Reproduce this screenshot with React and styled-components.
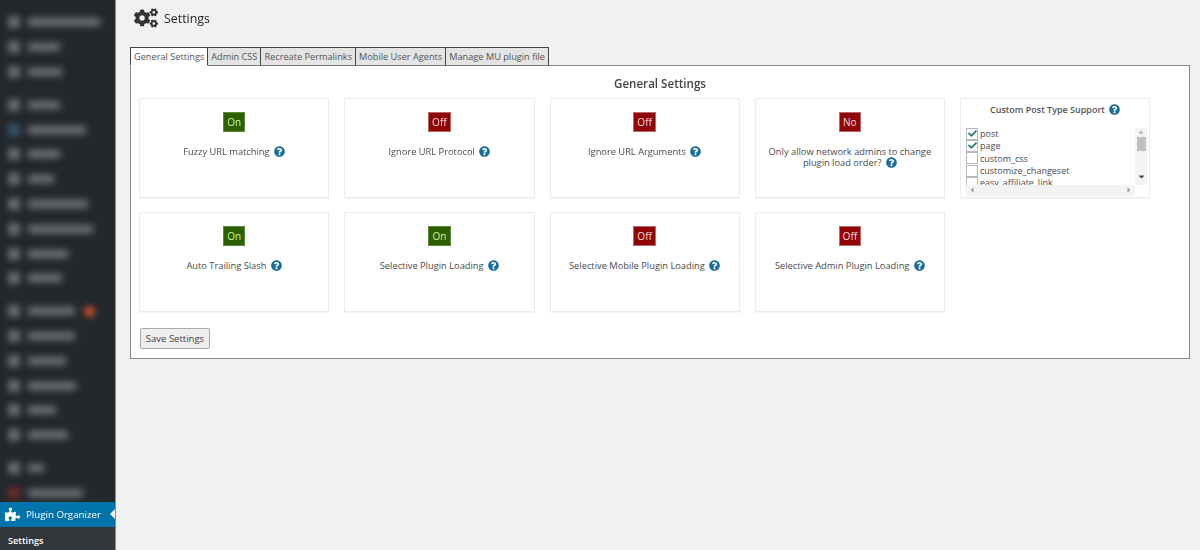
import React from 'react'
import styled, { createGlobalStyle } from 'styled-components'
import { FaCogs, FaPuzzlePiece, FaQuestionCircle, FaCheck, FaCaretUp, FaCaretDown, FaCaretLeft, FaCaretRight } from 'react-icons/fa'

const menuGroups = [
  [[72, 0], [32, 0], [34, 0]],
  [[32, 0], [58, 0, 'blue'], [32, 0], [26, 0], [60, 0], [65, 0], [40, 0], [34, 0]],
  [[47, 1], [47, 0], [38, 0], [48, 0], [28, 0], [40, 0]],
  [[16, 0], [55, 0, 'red']],
]

const firstRow = [
  { label: 'Fuzzy URL matching', state: 'On' },
  { label: 'Ignore URL Protocol', state: 'Off' },
  { label: 'Ignore URL Arguments', state: 'Off' },
  { label: 'Only allow network admins to change plugin load order?', state: 'No' },
]

const secondRow = [
  { label: 'Auto Trailing Slash', state: 'On' },
  { label: 'Selective Plugin Loading', state: 'On' },
  { label: 'Selective Mobile Plugin Loading', state: 'Off' },
  { label: 'Selective Admin Plugin Loading', state: 'Off' },
]

const postTypes = [
  { name: 'post', checked: true },
  { name: 'page', checked: true },
  { name: 'custom_css' },
  { name: 'customize_changeset' },
  { name: 'easy_affiliate_link' },
]

const tabs = ['General Settings', 'Admin CSS', 'Recreate Permalinks', 'Mobile User Agents', 'Manage MU plugin file']

const Toggle = ({ label, state }) => (
  <Card>
    <Switch $on={state === 'On'}>{state}</Switch>
    <CardLabel>
      {label} <Help />
    </CardLabel>
  </Card>
)

const App = () => (
  <Shell>
    <GlobalStyle />
    <Sidebar>
      <MenuList>
        {menuGroups.map((group, i) => (
          <MenuGroup key={i}>
            {group.map(([width, badge, tint], j) => (
              <MenuRow key={j}>
                <BlurIcon $tint={tint} />
                <BlurLabel style={{ width }} />
                {badge ? <BlurBadge /> : null}
              </MenuRow>
            ))}
          </MenuGroup>
        ))}
      </MenuList>
      <ActiveItem>
        <FaPuzzlePiece size={15} />
        <span>Plugin Organizer</span>
      </ActiveItem>
      <SubItem>Settings</SubItem>
    </Sidebar>

    <Main>
      <Header>
        <FaCogs size={24} />
        <h1>Settings</h1>
      </Header>
      <TabBar>
        {tabs.map((t, i) => (
          <Tab key={t} $active={i === 0}>{t}</Tab>
        ))}
      </TabBar>
      <Panel>
        <PanelTitle>General Settings</PanelTitle>
        <CardGrid>
          {firstRow.map((c) => <Toggle key={c.label} {...c} />)}
          <PostTypeCard>
            <PostTypeTitle>Custom Post Type Support <Help /></PostTypeTitle>
            <ListBox>
              <ListScroll>
                {postTypes.map((p) => (
                  <ListRow key={p.name}>
                    <CheckBox>{p.checked ? <FaCheck size={9} /> : null}</CheckBox>
                    {p.name}
                  </ListRow>
                ))}
              </ListScroll>
              <VScroll>
                <FaCaretUp size={8} />
                <VThumb />
                <FaCaretDown size={9} />
              </VScroll>
              <HScroll>
                <FaCaretLeft size={8} />
                <FaCaretRight size={8} />
              </HScroll>
            </ListBox>
          </PostTypeCard>
          {secondRow.map((c) => <Toggle key={c.label} {...c} />)}
        </CardGrid>
        <SaveButton>Save Settings</SaveButton>
      </Panel>
    </Main>
  </Shell>
)

export default App

const GlobalStyle = createGlobalStyle`
  html, body {
    margin: 0;
    height: 100%;
    overflow: hidden;
    background: #f1f1f1;
    font-family: "Open Sans", sans-serif;
    color: #444;
  }
`

const Shell = styled.div`
  display: flex;
  width: 1200px;
  height: 550px;
  overflow: hidden;
  filter: blur(0.35px);
`

const Sidebar = styled.aside`
  width: 115px;
  flex: none;
  display: flex;
  flex-direction: column;
  background: #23282d;
  border-right: 1px solid #8a8d90;
  box-sizing: content-box;
`

const MenuList = styled.div`
  flex: none;
  height: 502px;
  padding-top: 10px;
  box-sizing: border-box;
  overflow: hidden;
`

const MenuGroup = styled.div`
  margin-bottom: 8px;
`

const MenuRow = styled.div`
  display: flex;
  align-items: center;
  height: 24.8px;
  padding-left: 8px;
  gap: 8px;
`

const BlurIcon = styled.div`
  width: 12px;
  height: 12px;
  flex: none;
  background: ${({ $tint }) => ($tint === 'blue' ? '#35536a' : $tint === 'red' ? '#6a2a2a' : '#666b70')};
  filter: blur(3px);
`

const BlurLabel = styled.div`
  height: 8px;
  background: #6d7277;
  filter: blur(3.5px);
`

const BlurBadge = styled.div`
  width: 11px;
  height: 11px;
  margin-left: 1px;
  border-radius: 50%;
  background: #c9502a;
  filter: blur(3px);
`

const ActiveItem = styled.div`
  position: relative;
  height: 25px;
  flex: none;
  display: flex;
  align-items: center;
  gap: 6px;
  padding-left: 5px;
  background: #0073aa;
  color: #fff;
  font-size: 9.7px;

  &::after {
    content: '';
    position: absolute;
    right: 0;
    top: 7px;
    border: 5.5px solid transparent;
    border-right-color: #f1f1f1;
    border-left: 0;
  }
`

const SubItem = styled.div`
  flex: 1;
  padding: 7px 0 0 8px;
  background: #32373c;
  color: #fff;
  font-size: 9.2px;
  font-weight: 600;
`

const Main = styled.main`
  flex: 1;
  min-width: 0;
  padding: 0 10px 0 14px;
`

const Header = styled.div`
  display: flex;
  align-items: center;
  height: 47px;
  padding: 0 0 11px 4px;
  gap: 6px;
  box-sizing: border-box;
  color: #333;

  & > h1 {
    margin: 0;
    padding-top: 1px;
    font-size: 12.4px;
    font-weight: 400;
    color: #23282d;
  }
`

const TabBar = styled.div`
  display: flex;
  height: 19px;
  position: relative;
  z-index: 1;
`

const Tab = styled.div`
  display: flex;
  align-items: center;
  padding: 0 3px;
  box-sizing: border-box;
  font-size: 9.2px;
  white-space: nowrap;
  color: #555;
  border: 1px solid #444;
  border-left-width: ${({ $active }) => ($active ? '1px' : '0')};
  background: ${({ $active }) => ($active ? '#fff' : '#e4e4e4')};
  border-bottom-color: ${({ $active }) => ($active ? '#fff' : '#777')};
`

const Panel = styled.section`
  margin-top: -1px;
  height: 294px;
  box-sizing: border-box;
  padding: 10px 8px 0;
  background: #fff;
  border: 1px solid #888;
`

const PanelTitle = styled.h2`
  margin: 0 0 6px;
  height: 16px;
  line-height: 16px;
  text-align: center;
  font-size: 11.6px;
  font-weight: 600;
  color: #444;
`

const CardGrid = styled.div`
  display: grid;
  grid-template-columns: repeat(5, 190.25px);
  grid-auto-rows: 100px;
  column-gap: 15px;
  row-gap: 14px;
`

const Card = styled.div`
  display: flex;
  flex-direction: column;
  align-items: center;
  padding-top: 14px;
  box-sizing: border-box;
  border: 1px solid #ebebeb;
  box-shadow: 0 1px 1px rgba(0, 0, 0, 0.04);
`

const Switch = styled.div`
  min-width: 20.5px;
  height: 18px;
  display: flex;
  align-items: center;
  justify-content: center;
  font-size: 10px;
  color: ${({ $on }) => ($on ? '#c9f0a0' : '#fbdada')};
  background: ${({ $on }) => ($on ? '#2f6000' : '#8f0508')};
  box-shadow: 0 0 0 1px ${({ $on }) => ($on ? '#5c8a3c' : '#b86a6a')};
`

const CardLabel = styled.div`
  margin-top: 15px;
  padding: 0 10px;
  text-align: center;
  font-size: 9.3px;
  line-height: 11px;
  color: #4a4a4a;
`

const Help = styled(FaQuestionCircle).attrs({ size: 11 })`
  margin-left: 2px;
  vertical-align: -2px;
  color: #1a6e9c;
`

const PostTypeCard = styled(Card)`
  padding: 5px 0 0;
`

const PostTypeTitle = styled.div`
  font-size: 9px;
  font-weight: 600;
  line-height: 12px;
  color: #555;
`

const ListBox = styled.div`
  margin: 11.5px 0 0 5px;
  width: 181px;
  height: 68px;
  display: grid;
  grid-template-columns: 1fr 12px;
  grid-template-rows: 1fr 11px;
  align-self: flex-start;
`

const ListScroll = styled.div`
  overflow: hidden;
  font-size: 9px;
`

const ListRow = styled.div`
  display: flex;
  align-items: center;
  gap: 2px;
  height: 12.3px;
  color: #4a4a4a;
`

const CheckBox = styled.span`
  width: 10px;
  height: 10px;
  flex: none;
  display: flex;
  align-items: center;
  justify-content: center;
  border: 1px solid #b4b9be;
  color: #2a7d70;
`

const VScroll = styled.div`
  grid-row: 1;
  grid-column: 2;
  display: flex;
  flex-direction: column;
  align-items: center;
  background: #f3f3f3;
  color: #aaa;

  & > svg:last-child {
    margin-top: auto;
    margin-bottom: 4px;
    color: #444;
  }
`

const VThumb = styled.div`
  width: 9px;
  height: 14px;
  margin-top: 1px;
  background: #c1c1c1;
`

const HScroll = styled.div`
  grid-row: 2;
  grid-column: 1;
  display: flex;
  align-items: center;
  justify-content: space-between;
  padding: 0 2px;
  background: #f3f3f3;
  color: #999;
`

const SaveButton = styled.button`
  display: block;
  margin: 16px 0 0 1px;
  width: 70px;
  height: 21px;
  padding: 0;
  font-family: inherit;
  font-size: 9.5px;
  color: #444;
  background: #eee;
  border: 1px solid #aaa;
  border-radius: 2px;
`
